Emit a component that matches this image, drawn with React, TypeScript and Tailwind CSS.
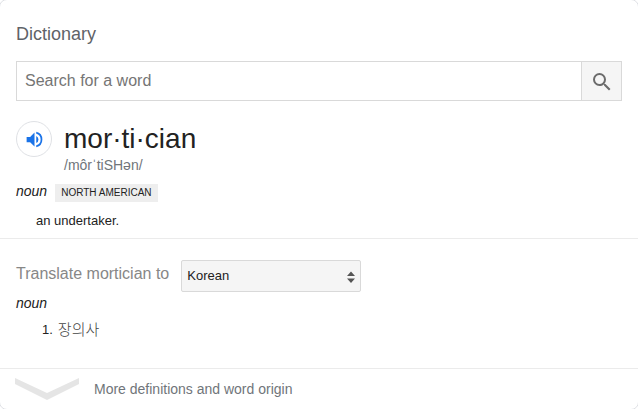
export default function App() {
  return (
    <div className="h-[409px] w-[638px] overflow-hidden bg-white">
      <div className="-mt-px -ml-px flex h-[411px] w-[640px] flex-col rounded-lg border border-[#dfe1e5] font-['Liberation_Sans','Noto_Sans_CJK_KR',sans-serif] text-[#222]">
        <section className="h-[239px] border-b border-[#ebebeb] px-4 pt-[22px]">
          <h1 className="h-[39px] text-[18px] leading-6 text-[#5f6368]">Dictionary</h1>
          <div className="flex h-10 w-[606px] border border-[#d9d9d9]">
            <input className="min-w-0 flex-1 px-2 text-base outline-none placeholder:text-[#757575]" placeholder="Search for a word" />
            <button aria-label="Search" className="flex w-10 items-center justify-center border-l border-[#d9d9d9] bg-[#f5f5f5]">
              <svg viewBox="0 0 24 24" className="mt-px size-6 fill-[#6b6b6b]"><path d="M15.5 14h-.79l-.28-.27A6.47 6.47 0 0 0 16 9.5 6.5 6.5 0 1 0 9.5 16c1.61 0 3.09-.59 4.23-1.57l.27.28v.79l5 4.99L20.49 19l-4.99-5zm-6 0a4.5 4.5 0 1 1 0-9 4.5 4.5 0 0 1 0 9z" /></svg>
            </button>
          </div>
          <div className="flex h-[73px] gap-3 pt-5">
            <button aria-label="Listen" className="flex size-9 items-center justify-center rounded-full border border-[#dfe1e5]">
              <svg viewBox="0 0 24 24" className="size-[21px] fill-[#1a73e8]"><path d="M3 9v6h4l5 5V4L7 9H3zm13.5 3A4.5 4.5 0 0 0 14 7.97v8.05A4.5 4.5 0 0 0 16.5 12zM14 3.23v2.06a7 7 0 0 1 0 13.42v2.06a9 9 0 0 0 0-17.54z" /></svg>
            </button>
            <div>
              <div className="h-[34px] text-[28px] leading-[36px]">mor·ti·cian</div>
              <div className="text-sm leading-5 text-[#70757a]">/môrˈtiSHən/</div>
            </div>
          </div>
          <div className="flex h-[37px] items-center gap-2 pb-1">
            <i className="text-sm">noun</i>
            <span className="mt-1 bg-[#eee] px-1.5 text-[10px] leading-[18px]">NORTH AMERICAN</span>
          </div>
          <p className="pl-5 text-[13px] leading-5">an undertaker.</p>
        </section>
        <section className="h-[130px] border-b border-[#ebebeb] px-4 pt-[21px]">
          <div className="flex h-8 gap-3">
            <span className="text-base leading-[27px] text-[#878787]">Translate mortician to</span>
            <button className="flex w-[180px] items-center justify-between rounded-[2px] border border-[#d9d9d9] bg-[#f5f5f5] px-[5px] text-[13px]">
              Korean
              <svg viewBox="0 0 8 12" className="mt-px h-3 w-2 fill-[#555]"><path d="M0 5 4 .5 8 5zM0 7.5h8L4 12z" /></svg>
            </button>
          </div>
          <i className="block text-sm leading-[22px]">noun</i>
          <p className="flex gap-[5px] pt-[3px] pl-[26px] text-[13px] leading-[26px]">
            <span>1.</span>
            <span className="text-[15px] leading-[25px] font-light text-[#444]">장의사</span>
          </p>
        </section>
        <footer className="flex h-10 items-center gap-[15px] pl-[15px] text-sm text-[#70757a]">
          <svg viewBox="0 0 64 22" className="h-[22px] w-16 fill-[#e5e5e5]"><path d="M0 0 32 15 64 0v6L32 22 0 6z" /></svg>
          More definitions and word origin
        </footer>
      </div>
    </div>
  );
}
